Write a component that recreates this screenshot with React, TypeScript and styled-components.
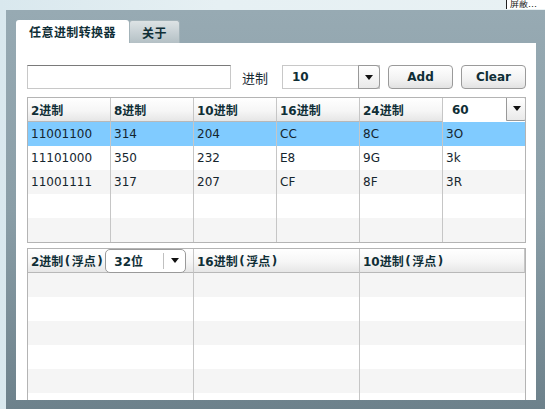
import styled, { createGlobalStyle } from 'styled-components';

const GlobalStyle = createGlobalStyle`
  html, body {
    margin: 0;
    padding: 0;
    height: 100%;
    overflow: hidden;
  }
  body {
    background: linear-gradient(90deg, #d9e8ee 0%, #e6f0f3 40%, #e8f1f3 100%);
    font-family: "DejaVu Sans", "Noto Sans CJK SC", sans-serif;
  }
`;

const Frame = styled.div`
  position: relative;
  margin: 10px 0 0 6px;
  width: calc(100% - 6px);
  height: 399px;
  background: linear-gradient(180deg, #97aab3 0%, #8a9ea7 50%, #6d818b 100%);
  padding: 10px 0 0 10px;
  box-sizing: border-box;
`;

const Notice = styled.div`
  position: absolute;
  top: 0;
  right: 0;
  width: 39px;
  height: 9px;
  background: #ffffff;
  border-left: 1px solid #202020;
  font-size: 9px;
  line-height: 9px;
  color: #222;
  overflow: hidden;
  white-space: nowrap;
  padding-left: 3px;
  box-sizing: border-box;
`;

const TabBar = styled.div`
  display: flex;
  height: 23px;
`;

const Tab = styled.div<{ $active?: boolean; $w: number }>`
  width: ${p => p.$w}px;
  height: 23px;
  box-sizing: border-box;
  display: flex;
  align-items: center;
  justify-content: center;
  border-radius: 3px 3px 0 0;
  font-size: 12px;
  font-weight: bold;
  letter-spacing: 0.4px;
  color: #0f2e36;
  background: ${p => (p.$active ? '#ffffff' : 'linear-gradient(180deg, #dde3e5 0%, #b4c0c5 100%)')};
  border: ${p => (p.$active ? 'none' : '1px solid #a3b3b9')};
  border-bottom: none;
`;

const Panel = styled.div`
  width: 520px;
  height: 357px;
  background: #ffffff;
  padding: 22px 10px 0 11px;
  box-sizing: border-box;
  overflow: hidden;
`;

const Toolbar = styled.div`
  display: flex;
  align-items: center;
  height: 24px;
`;

const TextInput = styled.input`
  width: 204px;
  height: 24px;
  box-sizing: border-box;
  border: 1px solid #c8c8c8;
  border-top-color: #7a7a7a;
  padding: 0 4px;
  font: 12px "DejaVu Sans", sans-serif;
  outline: none;
`;

const Label = styled.span`
  margin-left: 11px;
  width: 40px;
  font-size: 13px;
  color: #1a2a33;
`;

const Select = styled.div<{ $w: number; $rounded?: boolean; $bare?: boolean }>`
  display: flex;
  width: ${p => p.$w}px;
  height: 24px;
  box-sizing: border-box;
  border: ${p => (p.$bare ? 'none' : `1px solid ${p.$rounded ? '#9a9a9a' : '#c8c8c8'}`)};
  background: #ffffff;
  border-radius: ${p => (p.$rounded ? '5px' : '0')};
  margin-left: ${p => (p.$rounded ? '1px' : '0')};
`;

const SelectValue = styled.div<{ $pad?: number }>`
  flex: 1;
  display: flex;
  align-items: center;
  padding-left: ${p => p.$pad ?? 9}px;
  font-size: 12px;
  font-weight: bold;
  color: #0f2e36;
`;

const SelectButton = styled.div<{ $flat?: boolean }>`
  width: 22px;
  box-sizing: border-box;
  display: flex;
  align-items: center;
  justify-content: center;
  ${p =>
    p.$flat
      ? 'margin: 3px 0; border-left: 1px solid #c0c0c0;'
      : 'height: 24px; margin: -1px -1px -1px 0; background: linear-gradient(180deg, #ffffff 0%, #e9e9e9 100%); border: 1px solid #999; border-radius: 0 4px 4px 0;'}
`;

const Arrow = styled.span`
  width: 0;
  height: 0;
  border-left: 4px solid transparent;
  border-right: 4px solid transparent;
  border-top: 5px solid #111;
`;

const Button = styled.button`
  margin-left: 8px;
  width: 65px;
  height: 24px;
  box-sizing: border-box;
  border: 1px solid #9a9a9a;
  border-radius: 4px;
  background: linear-gradient(180deg, #ffffff 0%, #f2f2f2 60%, #e2e2e2 100%);
  font: bold 12px "DejaVu Sans", sans-serif;
  color: #0f2e36;
  padding: 0;
`;

const Table = styled.div<{ $cols: string; $mt: number; $h: number; $open?: boolean }>`
  margin-top: ${p => p.$mt}px;
  width: 499px;
  height: ${p => p.$h}px;
  box-sizing: border-box;
  border: 1px solid #b4b4b4;
  ${p => (p.$open ? 'border-bottom: none;' : '')}
  display: grid;
  grid-template-columns: ${p => p.$cols};
  grid-auto-rows: 24px;
  overflow: hidden;
  background: #ffffff;
`;

const HeadCell = styled.div<{ $bare?: boolean }>`
  display: flex;
  align-items: center;
  height: 24px;
  box-sizing: border-box;
  padding-left: ${p => (p.$bare ? 0 : 3)}px;
  border-right: 1px solid #c6c6c6;
  border-bottom: 1px solid #b8b8b8;
  background: linear-gradient(180deg, #ffffff 0%, #f6f6f6 55%, #e6e6e6 100%);
  font-size: 12px;
  font-weight: bold;
  color: #0f2e36;
  white-space: nowrap;
  &:last-child {
    border-right: none;
  }
`;

const Paren = styled.span`
  margin: 0 1.5px;
`;

const Cell = styled.div<{ $bg: string; $last?: boolean }>`
  display: flex;
  align-items: center;
  padding-left: 3px;
  box-sizing: border-box;
  background: ${p => p.$bg};
  border-right: ${p => (p.$last ? 'none' : '1px solid #c6c6c6')};
  font-size: 12px;
  color: #15252e;
`;

const headers1 = ['2进制', '8进制', '10进制', '16进制', '24进制'];
const rows1 = [
  ['11001100', '314', '204', 'CC', '8C', '3O'],
  ['11101000', '350', '232', 'E8', '9G', '3k'],
  ['11001111', '317', '207', 'CF', '8F', '3R'],
  ['', '', '', '', '', ''],
  ['', '', '', '', '', ''],
];

const rowBg = (i: number, selected: boolean) => (selected ? '#80cbff' : i % 2 === 0 ? '#f5f5f5' : '#ffffff');

const FloatHead = ({ base }: { base: string }) => (
  <>
    {base}
    <Paren>(</Paren>浮点<Paren>)</Paren>
  </>
);

export default function App() {
  return (
    <>
      <GlobalStyle />
      <Notice>屏蔽…</Notice>
      <Frame>
        <TabBar>
          <Tab $active $w={113}>任意进制转换器</Tab>
          <Tab $w={51}>关于</Tab>
        </TabBar>
        <Panel>
          <Toolbar>
            <TextInput />
            <Label>进制</Label>
            <Select $w={98}>
              <SelectValue>10</SelectValue>
              <SelectButton>
                <Arrow />
              </SelectButton>
            </Select>
            <Button>Add</Button>
            <Button>Clear</Button>
          </Toolbar>

          <Table $cols="83px 83px 83px 83px 83px 1fr" $mt={8} $h={146}>
            {headers1.map(h => (
              <HeadCell key={h}>{h}</HeadCell>
            ))}
            <HeadCell $bare>
              <Select $w={84} $bare>
                <SelectValue>60</SelectValue>
                <SelectButton>
                  <Arrow />
                </SelectButton>
              </Select>
            </HeadCell>
            {rows1.map((r, i) =>
              r.map((v, j) => (
                <Cell key={`${i}-${j}`} $bg={rowBg(i, i === 0)} $last={j === 5}>
                  {v}
                </Cell>
              ))
            )}
          </Table>

          <Table $cols="166px 166px 1fr" $mt={5} $h={152} $open>
            <HeadCell>
              <FloatHead base="2进制" />
              <Select $w={81} $rounded>
                <SelectValue $pad={8}>32位</SelectValue>
                <SelectButton $flat>
                  <Arrow />
                </SelectButton>
              </Select>
            </HeadCell>
            <HeadCell>
              <FloatHead base="16进制" />
            </HeadCell>
            <HeadCell>
              <FloatHead base="10进制" />
            </HeadCell>
            {[0, 1, 2, 3, 4, 5].map(i =>
              [0, 1, 2].map(j => <Cell key={`${i}-${j}`} $bg={rowBg(i, false)} $last={j === 2} />)
            )}
          </Table>
        </Panel>
      </Frame>
    </>
  );
}
